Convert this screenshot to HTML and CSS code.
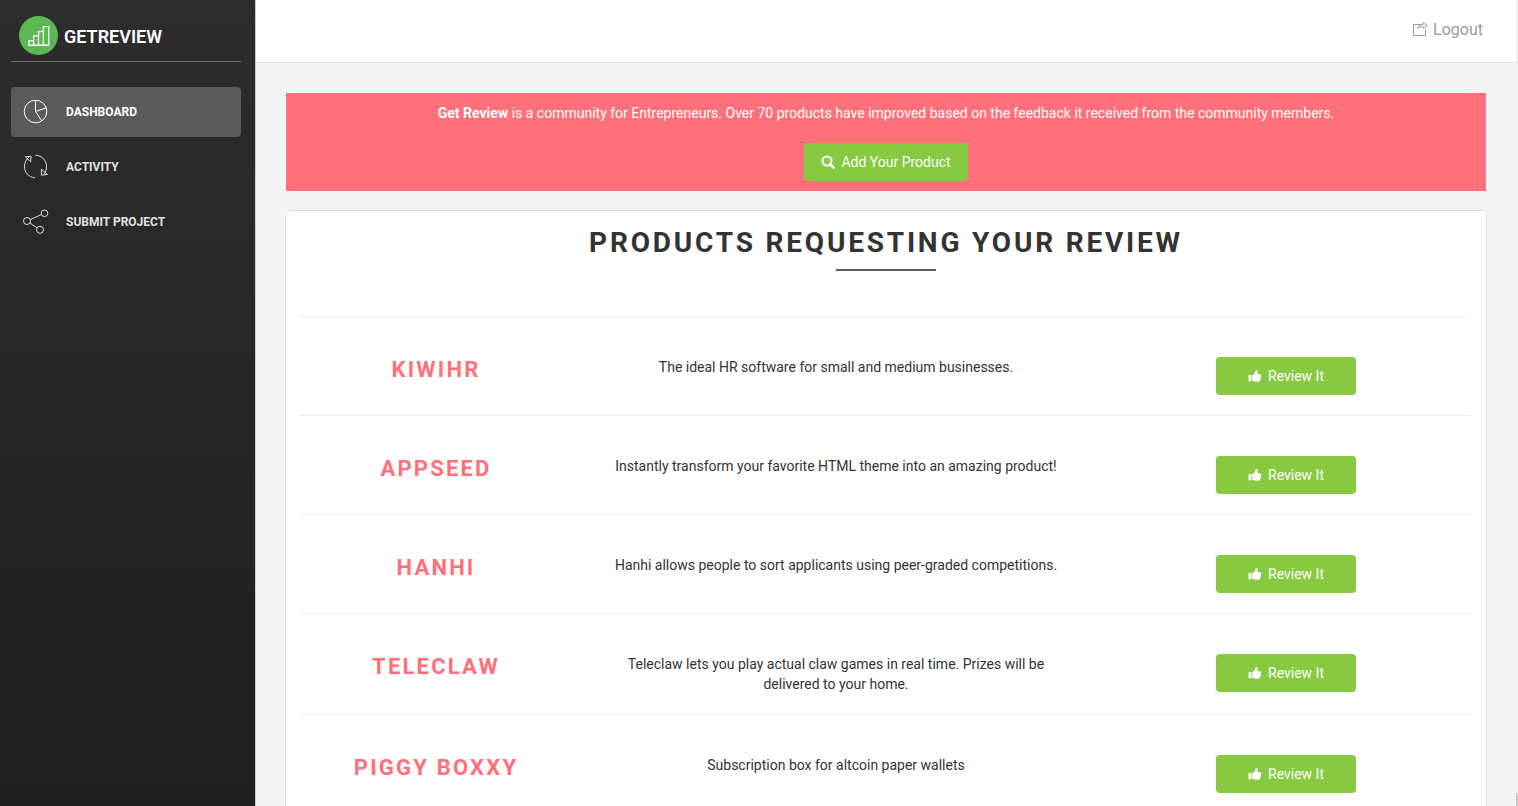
FILE: index.html
```html
<!DOCTYPE html>
<html lang="en">
<head>
    <meta charset="UTF-8">
    <meta name="viewport" content="width=device-width, initial-scale=1.0">
    <title>GetReview - Dashboard</title>
    <link rel="stylesheet" href="styles.css">
</head>
<body>
    <!-- shared icons -->
    <svg class="icon-defs" width="0" height="0">
        <symbol id="icon-thumb" viewBox="0 0 14 13">
            <path d="M0.5 5.5h3v6.3h-3z"/>
            <path d="M4.3 5.6c1.6-.6 2.600-1.800 3-3.100.2-1 .2-1.900 1.100-1.900 1.500 0 1.700 1.700 1.200 3.200l-.3 1h2.600c1.600 0 1.800 1.600.9 2.100.6.7.4 1.600-.3 1.900.4.800.1 1.500-.5 1.800.2 1.100-.6 1.700-1.700 1.700H8c-1.500 0-2.500-.7-3.700-.7z"/>
        </symbol>
    </svg>

    <div class="wrapper">
        <aside class="sidebar">
            <a href="#" class="logo">
                <svg class="logo-icon" viewBox="0 0 40 40">
                    <circle cx="20" cy="20" r="20" fill="#5cb853"/>
                    <path d="M10 30v-4.500h5v4.500m0-4.500v-5h5v9.500m0-9.500v-4.500h5v14m0-14v-5h5.500v19H9.500" fill="none" stroke="#fff" stroke-width="1.300"/>
                </svg>
                <span>GETREVIEW</span>
            </a>

            <nav class="menu">
                <a href="#" class="active">
                    <svg viewBox="0 0 26 26">
                        <circle cx="12.500" cy="12.500" r="11.300"/>
                        <path d="M12.500 1.200v11.300l10.700-3.700M12.500 12.500l6.300 9.400"/>
                    </svg>
                    <span>Dashboard</span>
                </a>
                <a href="#">
                    <svg viewBox="0 0 26 26">
                        <path d="M12 23.900C5.300 23 1.300 18 1.500 12.100 1.600 8.500 3.400 5.200 5.900 3M12.500 1.200c6.500.3 11 5.300 11 11.300 0 3.200-1 5.500-2.600 7.700"/>
                        <path d="M2.300 2.900l5.800-.7-.4 5.700zM18.400 15.300v5.900l6-.8z"/>
                    </svg>
                    <span>Activity</span>
                </a>
                <a href="#">
                    <svg viewBox="0 0 26 26">
                        <circle cx="4" cy="12" r="3.500"/>
                        <circle cx="21.500" cy="4.300" r="3.300"/>
                        <circle cx="17" cy="20.800" r="3.500"/>
                        <path d="M7.200 10.600l11.200-5M6.900 14l7 4.800"/>
                    </svg>
                    <span>Submit Project</span>
                </a>
            </nav>
        </aside>

        <div class="main-panel">
            <header class="navbar">
                <a href="#" class="logout">
                    <svg viewBox="0 0 16 16">
                        <path d="M9 2.500H1.500v11h12V7"/>
                        <path d="M5.500 6.500C6.300 4 8 2.500 11 2.500V.7l4.500 2.800L11 6.400V4.600C8.500 4.600 7 5 5.500 6.500z"/>
                    </svg>
                    <span>Logout</span>
                </a>
            </header>

            <main class="content">
                <section class="banner">
                    <p><strong>Get Review</strong> is a community for Entrepreneurs. Over 70 products have improved based on the feedback it received from the community members.</p>
                    <button type="button" class="btn">
                        <svg viewBox="0 0 14 14">
                            <circle cx="6" cy="6" r="4.500" fill="none" stroke="currentColor" stroke-width="2.200"/>
                            <path d="M9.300 9.300l3.300 3.300" stroke="currentColor" stroke-width="2.600" stroke-linecap="round"/>
                        </svg>
                        <span>Add Your Product</span>
                    </button>
                </section>

                <section class="card">
                    <h1>Products requesting your review</h1>

                    <div class="product">
                        <h2>KiwiHR</h2>
                        <p>The ideal HR software for small and medium businesses.</p>
                        <div class="action">
                            <button type="button" class="btn btn-review"><svg viewBox="0 0 14 13"><use href="#icon-thumb"/></svg><span>Review It</span></button>
                        </div>
                    </div>

                    <div class="product">
                        <h2>AppSeed</h2>
                        <p>Instantly transform your favorite HTML theme into an amazing product!</p>
                        <div class="action">
                            <button type="button" class="btn btn-review"><svg viewBox="0 0 14 13"><use href="#icon-thumb"/></svg><span>Review It</span></button>
                        </div>
                    </div>

                    <div class="product">
                        <h2>Hanhi</h2>
                        <p>Hanhi allows people to sort applicants using peer-graded competitions.</p>
                        <div class="action">
                            <button type="button" class="btn btn-review"><svg viewBox="0 0 14 13"><use href="#icon-thumb"/></svg><span>Review It</span></button>
                        </div>
                    </div>

                    <div class="product">
                        <h2>Teleclaw</h2>
                        <p>Teleclaw lets you play actual claw games in real time. Prizes will be delivered to your home.</p>
                        <div class="action">
                            <button type="button" class="btn btn-review"><svg viewBox="0 0 14 13"><use href="#icon-thumb"/></svg><span>Review It</span></button>
                        </div>
                    </div>

                    <div class="product">
                        <h2>Piggy Boxxy</h2>
                        <p>Subscription box for altcoin paper wallets</p>
                        <div class="action">
                            <button type="button" class="btn btn-review"><svg viewBox="0 0 14 13"><use href="#icon-thumb"/></svg><span>Review It</span></button>
                        </div>
                    </div>
                </section>
            </main>
        </div>

        <div class="scroll-track"><div class="scroll-thumb"></div></div>
    </div>
</body>
</html>
```
FILE: styles.css
```css
* {
    margin: 0;
    padding: 0;
    box-sizing: border-box;
}

body {
    font-family: Roboto, "Helvetica Neue", Arial, sans-serif;
    font-size: 14px;
    line-height: 20px;
    color: #333;
    background: #f4f4f4;
}

a {
    text-decoration: none;
}

.icon-defs {
    display: none;
}

.wrapper {
    display: flex;
    height: 100vh;
    overflow: hidden;
}

/* sidebar */
.sidebar {
    flex: 0 0 256px;
    padding: 0 14px 0 11px;
    background: linear-gradient(to bottom, #2d2d2d 0%, #1f1f1f 100%);
    border-right: 1px solid #ccc;
}

.logo {
    display: flex;
    align-items: center;
    gap: 6px;
    height: 62px;
    padding: 10px 8px 0;
    border-bottom: 1px solid #6c6c6c;
    color: #fff;
    font-size: 18px;
    line-height: 20px;
    font-weight: 600;
}

.logo span {
    padding-top: 2px;
}

.logo-icon {
    width: 39px;
    height: 39px;
}

.menu {
    display: flex;
    flex-direction: column;
    gap: 5px;
    margin-top: 25px;
}

.menu a {
    display: flex;
    align-items: center;
    gap: 17px;
    height: 50px;
    padding: 0 12px;
    border-radius: 4px;
    color: #fff;
    font-size: 12px;
    font-weight: 700;
    text-transform: uppercase;
    opacity: 0.86;
}

.menu a.active {
    background: #5b5b5b;
    opacity: 1;
}

.menu svg {
    width: 26px;
    height: 26px;
    fill: none;
    stroke: currentColor;
}

/* main panel */
.main-panel {
    flex: 1;
    min-width: 0;
}

.navbar {
    display: flex;
    justify-content: flex-end;
    height: 63px;
    padding: 20px 33px 0;
    background: #fff;
    border-bottom: 1px solid #e2e2e2;
}

.logout {
    display: flex;
    align-items: center;
    gap: 5px;
    height: 20px;
    color: #9a9a9a;
    font-size: 16px;
}

.logout svg {
    width: 16px;
    height: 16px;
    fill: none;
    stroke: currentColor;
}

.content {
    padding: 30px;
}

.banner {
    display: flex;
    flex-direction: column;
    align-items: center;
    gap: 20px;
    padding: 10px;
    margin-bottom: 20px;
    background: #ff707a;
    color: #fff;
    text-align: center;
}

.btn {
    display: inline-flex;
    align-items: center;
    justify-content: center;
    gap: 6px;
    height: 38px;
    padding: 0 17px;
    border: none;
    border-radius: 4px;
    background: #87c940;
    color: #fff;
    font: inherit;
    cursor: pointer;
}

.btn:hover {
    background: #7abf32;
}

.btn svg {
    width: 14px;
    height: 14px;
    fill: currentColor;
}

.btn-review {
    min-width: 140px;
}

.card {
    padding: 15px 15px 30px;
    border-radius: 4px;
    background: #fff;
    box-shadow: 0 0 0 1px #dedede;
}

.card h1 {
    margin-bottom: 45px;
    font-size: 28px;
    line-height: 34px;
    font-weight: 700;
    letter-spacing: 0.1em;
    text-align: center;
    text-transform: uppercase;
}

.card h1::after {
    content: "";
    display: block;
    width: 100px;
    height: 2px;
    margin: 9px auto 0;
    background: #5e5e5e;
}

.product {
    display: grid;
    grid-template-columns: 3fr 5fr 4fr;
    padding: 40px 0 20px;
    margin: 0 -15px;
    text-align: center;
    /* line inset by the card padding */
    background: linear-gradient(#eee, #eee) 15px 0 / calc(100% - 30px) 1px no-repeat;
    border-top: 1px solid transparent;
    background-origin: border-box;
}

.product h2 {
    padding: 0 15px;
    color: #ff707a;
    font-size: 22px;
    line-height: 26px;
    font-weight: 700;
    letter-spacing: 0.1em;
    text-transform: uppercase;
}

.product p {
    padding: 0 15px;
}

/* slim scrollbar at the window edge */
.scroll-track {
    display: flex;
    flex: 0 0 2px;
    align-items: flex-end;
    background: #f0f0f0;
}

.scroll-thumb {
    width: 100%;
    height: 13px;
    background: #c8c8c8;
}
```
